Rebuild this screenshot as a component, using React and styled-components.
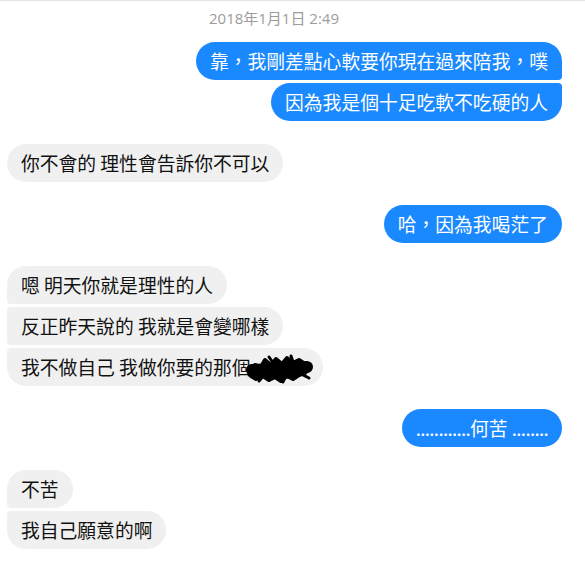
import styled, { createGlobalStyle } from "styled-components";

const GlobalStyle = createGlobalStyle`
  html, body {
    margin: 0;
    padding: 0;
    background: #fff;
  }
`;

const Page = styled.div`
  border-top: 1px solid #e5e5e5;
  padding: 0 23px 0 7px;
  min-height: 566px;
  box-sizing: border-box;
`;

const Stamp = styled.div`
  padding: 7px 21px 0 0;
  margin-bottom: 14px;
  text-align: center;
  font-family: "Open Sans", "Noto Sans CJK TC", sans-serif;
  font-size: 15px;
  line-height: 20px;
  color: #9c9c9c;
`;

const Thread = styled.div`
  display: flex;
  flex-direction: column;
  gap: 23px;
`;

const Group = styled.div`
  display: flex;
  flex-direction: column;
  align-items: ${(p) => (p.$me ? "flex-end" : "flex-start")};
  gap: 3px;
`;

const Bubble = styled.div`
  font-family: "Noto Sans CJK TC", sans-serif;
  font-size: 18.8px;
  line-height: 22px;
  padding: 8px 14px;
  white-space: nowrap;
  background: ${(p) => (p.$me ? "#1a88fe" : "#f0f0f0")};
  color: ${(p) => (p.$me ? "#fff" : "#111")};
  border-radius: ${(p) => {
    const a = p.$first ? "19px" : "4px";
    const b = p.$last ? "19px" : "4px";
    return p.$me ? `19px ${a} ${b} 19px` : `${a} 19px 19px ${b}`;
  }};
`;

const Dots = styled.span`
  letter-spacing: -0.7px;
`;

const Censor = styled.svg`
  display: inline-block;
  vertical-align: middle;
  margin: -7px -2px -5px -4px;
  overflow: visible;
`;

// Messages, grouped by sender
const groups = [
  { me: true, msgs: ["靠，我剛差點心軟要你現在過來陪我，噗", "因為我是個十足吃軟不吃硬的人"] },
  { me: false, msgs: ["你不會的 理性會告訴你不可以"] },
  { me: true, msgs: ["哈，因為我喝茫了"] },
  {
    me: false,
    msgs: ["嗯 明天你就是理性的人", "反正昨天說的 我就是會變哪樣", "我不做自己 我做你要的那個"],
    censorLast: true,
  },
  { me: true, msgs: [<><Dots>............</Dots>何苦 <Dots>........</Dots></>] },
  { me: false, msgs: ["不苦", "我自己願意的啊"] },
];

function Scribble() {
  return (
    <Censor viewBox="0 0 64 28" width="64" height="28">
      <path
        d="M2 17 L8 10 L14 12 L18 5 L24 10 L29 4 L35 9 L40 3 L46 8 L52 5 L58 9 L62 13 L58 18 L52 20 L46 24 L40 21 L34 26 L28 22 L22 25 L16 21 L9 24 L4 21 Z"
        fill="#000"
        stroke="#000"
        strokeWidth="4"
        strokeLinejoin="round"
      />
      <path d="M5 15 L60 12" stroke="#000" strokeWidth="12" strokeLinecap="round" />
      <path d="M22 2 L27 9 M44 1 L46 7 M12 26 L17 20 M36 27 L39 20 M56 20 L62 23" stroke="#000" strokeWidth="3" strokeLinecap="round" />
    </Censor>
  );
}

export default function App() {
  return (
    <>
      <GlobalStyle />
      <Page>
        <Stamp>2018年1月1日 2:49</Stamp>
        <Thread>
          {groups.map((g, gi) => (
            <Group key={gi} $me={g.me}>
              {g.msgs.map((m, i) => (
                <Bubble
                  key={i}
                  $me={g.me}
                  $first={i === 0}
                  $last={i === g.msgs.length - 1}
                >
                  {m}
                  {g.censorLast && i === g.msgs.length - 1 && <Scribble />}
                </Bubble>
              ))}
            </Group>
          ))}
        </Thread>
      </Page>
    </>
  );
}
